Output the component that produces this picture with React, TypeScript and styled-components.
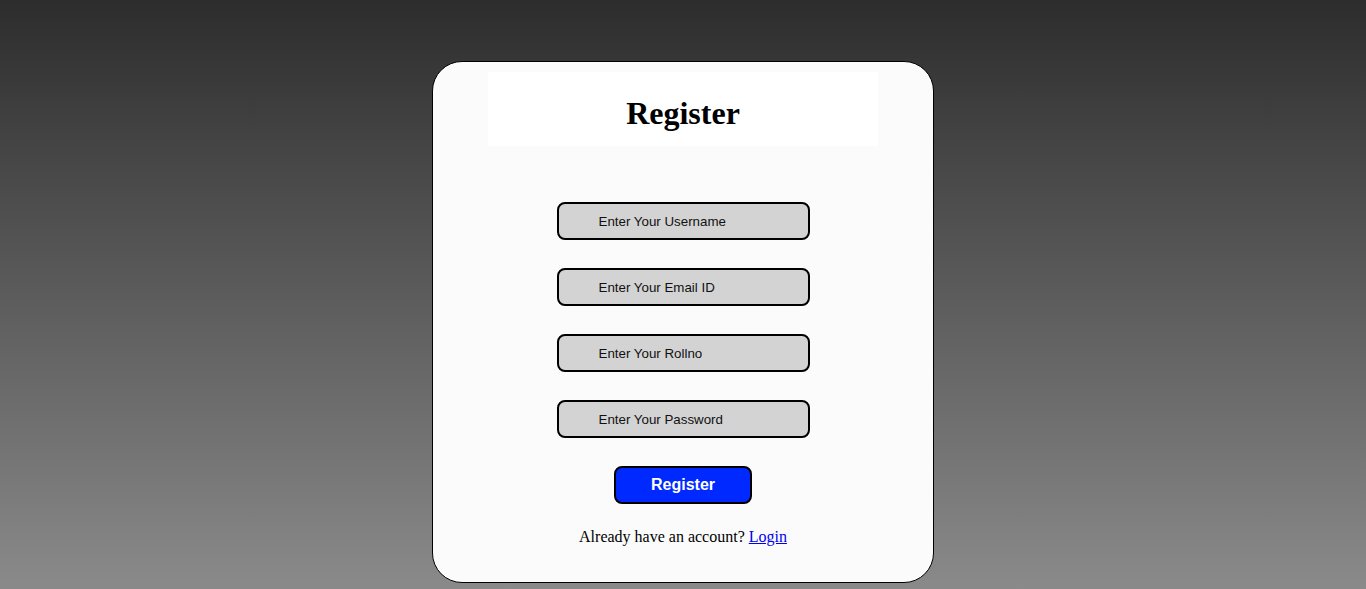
import React from 'react'
import styled, { createGlobalStyle } from 'styled-components'

const GlobalStyle = createGlobalStyle`
  html, body {
    margin: 0;
    padding: 0;
  }
  body {
    font-family: "Liberation Serif", "Times New Roman", serif;
  }
`

const Page = styled.div`
  min-height: 589px;
  display: flex;
  justify-content: center;
  align-items: flex-start;
  padding-top: 61px;
  box-sizing: border-box;
  background: linear-gradient(to bottom, #2d2d2d, #8a8a8a);
`

const Card = styled.div`
  width: 502px;
  height: 522px;
  box-sizing: border-box;
  border: 1px solid #000;
  border-radius: 30px;
  background: #fbfbfb;
  padding-top: 10px;
  display: flex;
  flex-direction: column;
  align-items: center;
`

const Header = styled.div`
  width: 390px;
  height: 74px;
  box-sizing: border-box;
  padding-top: 8px;
  background: #fff;
  display: flex;
  align-items: center;
  justify-content: center;
`

const Title = styled.h1`
  margin: 0;
  font-size: 32px;
  font-weight: bold;
  color: #000;
  font-family: "Liberation Serif", "Times New Roman", serif;
`

const Form = styled.form`
  margin-top: 56px;
  display: flex;
  flex-direction: column;
  align-items: center;
  gap: 28px;
`

const Field = styled.input`
  width: 253px;
  height: 38px;
  box-sizing: border-box;
  border: 2px solid #000;
  border-radius: 8px;
  background: #d3d3d3;
  padding: 0 0 0 40px;
  font-family: "Liberation Sans", Arial, sans-serif;
  font-size: 13.33px;
  color: #000;
  outline: none;

  &::placeholder {
    color: #111;
  }
`

const Submit = styled.button`
  width: 138px;
  height: 38px;
  box-sizing: border-box;
  border: 2px solid #000;
  border-radius: 8px;
  background: #0029ff;
  color: #fff;
  font-family: "Liberation Sans", Arial, sans-serif;
  font-size: 16px;
  font-weight: bold;
  cursor: pointer;
`

const Footer = styled.p`
  margin: 24px 0 0;
  font-size: 16px;
  line-height: 18px;
  color: #000;
`

const LoginLink = styled.a`
  color: #0000ee;
  text-decoration: underline;
`

export default function App() {
  return (
    <>
      <GlobalStyle />
      <Page>
        <Card>
          <Header>
            <Title>Register</Title>
          </Header>
          <Form onSubmit={(e) => e.preventDefault()}>
            <Field type="text" placeholder="Enter Your Username" />
            <Field type="email" placeholder="Enter Your Email ID" />
            <Field type="text" placeholder="Enter Your Rollno" />
            <Field type="password" placeholder="Enter Your Password" />
            <Submit type="submit">Register</Submit>
          </Form>
          <Footer>
            Already have an account? <LoginLink href="#">Login</LoginLink>
          </Footer>
        </Card>
      </Page>
    </>
  )
}
